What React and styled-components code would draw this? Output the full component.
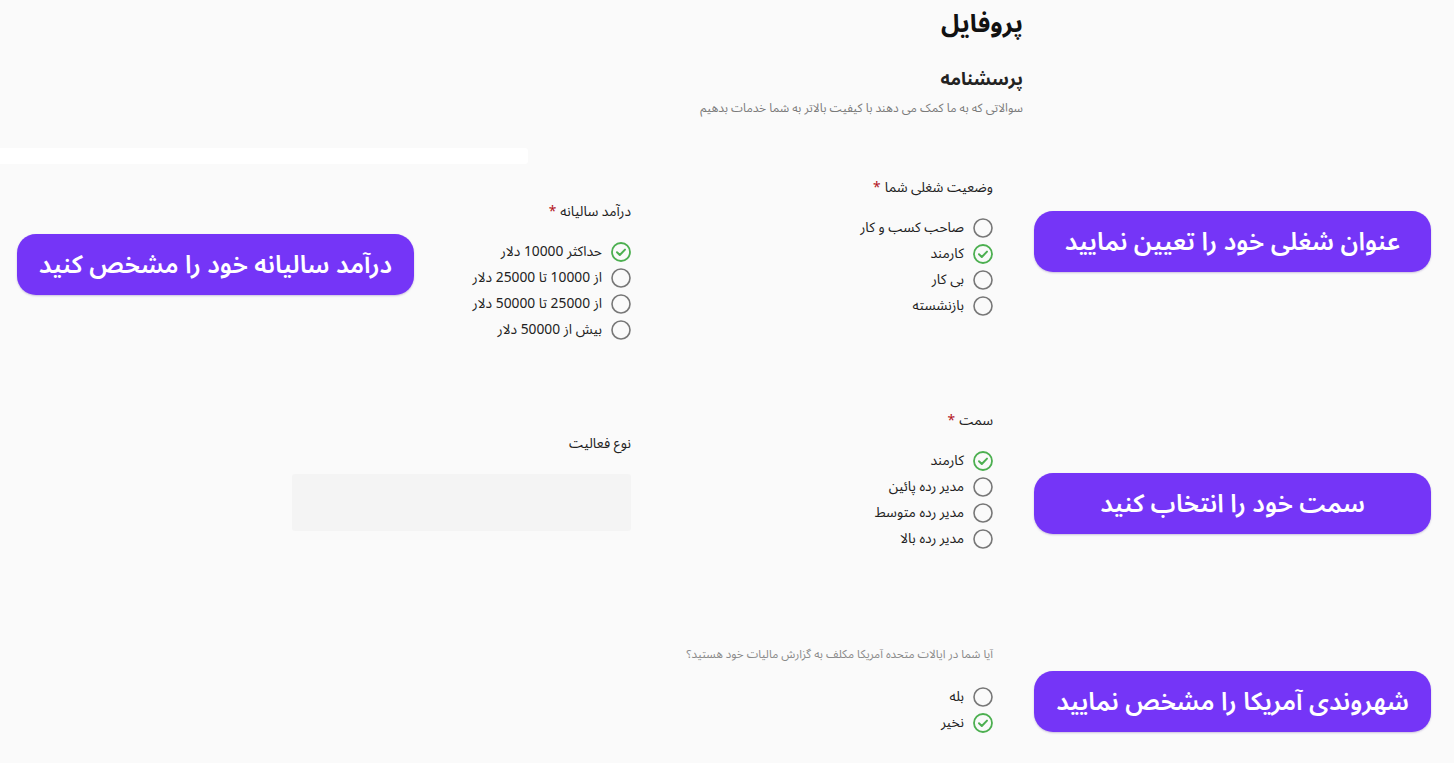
import React from "react";
import styled, { createGlobalStyle } from "styled-components";

const Global = createGlobalStyle`
  html, body { margin: 0; padding: 0; background: #fafafa; }
  body { font-family: "Noto Sans Arabic", "DejaVu Sans", sans-serif; color: #1e1e1e; }
  * { box-sizing: border-box; }
`;

const Page = styled.div`
  position: relative;
  width: 1454px;
  height: 763px;
  display: flex;
  flex-direction: column;
  overflow: hidden;
`;

const Header = styled.header`
  width: 733px;
  margin-left: 290px;
  padding-top: 4px;
  direction: rtl;
  text-align: right;
`;

const Title = styled.h1`
  margin: 0;
  padding-top: 1px;
  font-size: 25px;
  line-height: 38px;
  font-weight: 700;
  color: #111;
`;

const Subtitle = styled.h2`
  margin: 22px 0 0;
  font-size: 18px;
  line-height: 28px;
  font-weight: 700;
  color: #222;
`;

const Description = styled.p`
  margin: 6px 0 0;
  font-size: 12px;
  line-height: 20px;
  color: #7a7a7a;
`;

const Strip = styled.div`
  margin-top: 29px;
  width: 528px;
  height: 16px;
  flex-shrink: 0;
  background: #ffffff;
  border-radius: 0 3px 3px 0;
`;

const Form = styled.div`
  margin-top: 14px;
  margin-left: 290px;
  width: 733px;
  padding-right: 30px;
  direction: rtl;
  display: grid;
  grid-template-columns: 340px 340px;
  grid-template-rows: 233px 234px auto;
  column-gap: 22px;
`;

const Field = styled.div`
  display: flex;
  flex-direction: column;
  align-items: flex-start;
  padding-top: ${(p) => p.$offset || 0}px;
`;

const Label = styled.div`
  font-size: ${(p) => (p.$muted ? 11.6 : 13.8)}px;
  line-height: 20px;
  height: 20px;
  white-space: nowrap;
  color: ${(p) => (p.$muted ? "#8a8a8a" : "#222")};
`;

const Star = styled.span`
  color: #b3141c;
  margin-right: 4px;
`;

const Options = styled.div`
  margin-top: ${(p) => p.$gap}px;
  display: flex;
  flex-direction: column;
  gap: 6px;
`;

const Option = styled.label`
  display: flex;
  align-items: center;
  gap: 9px;
  height: 20px;
  font-size: 13.8px;
  line-height: 20px;
  white-space: nowrap;
  color: #222;
  cursor: pointer;
`;

const OptionText = styled.span`
  display: block;
  line-height: 20px;
  height: 20px;
`;

const TextBox = styled.div`
  margin-top: 20px;
  width: 339px;
  height: 57px;
  background: #f4f4f4;
  border-radius: 3px;
`;

const Badge = styled.div`
  position: absolute;
  left: ${(p) => p.$x}px;
  top: ${(p) => p.$y}px;
  width: 397px;
  height: 61px;
  border-radius: 19px;
  background: #7535f7;
  color: #fff;
  direction: rtl;
  display: flex;
  align-items: center;
  justify-content: center;
  font-size: 25px;
  line-height: 34px;
  font-weight: 600;
  white-space: nowrap;
  box-shadow: 0 1px 2px rgba(60, 20, 140, 0.25);
`;

const Radio = ({ checked }) =>
  checked ? (
    <svg width="20" height="20" viewBox="0 0 20 20">
      <circle cx="10" cy="10" r="9" fill="none" stroke="#4caf50" strokeWidth="1.8" />
      <path d="M6 10.3 L8.8 13 L14 7.6" fill="none" stroke="#4caf50" strokeWidth="2" strokeLinecap="round" strokeLinejoin="round" />
    </svg>
  ) : (
    <svg width="20" height="20" viewBox="0 0 20 20">
      <circle cx="10" cy="10" r="9" fill="none" stroke="#777" strokeWidth="1.6" />
    </svg>
  );

const Question = ({ label, required, muted, options, checked, offset, gap = 20 }) => (
  <Field $offset={offset}>
    <Label $muted={muted}>
      {label}
      {required && <Star>*</Star>}
    </Label>
    <Options $gap={gap}>
      {options.map((o, i) => (
        <Option key={o}>
          <Radio checked={i === checked} />
          <OptionText>{o}</OptionText>
        </Option>
      ))}
    </Options>
  </Field>
);

export default function App() {
  return (
    <Page>
      <Global />
      <Header>
        <Title>پروفایل</Title>
        <Subtitle>پرسشنامه</Subtitle>
        <Description>سوالاتی که به ما کمک می دهند با کیفیت بالاتر به شما خدمات بدهیم</Description>
      </Header>
      <Strip />
      <Form>
        <Question
          label="وضعیت شغلی شما"
          required
          options={["صاحب کسب و کار", "کارمند", "بی کار", "بازنشسته"]}
          checked={1}
        />
        <Question
          label="درآمد سالیانه"
          required
          offset={24}
          gap={20}
          options={["حداکثر 10000 دلار", "از 10000 تا 25000 دلار", "از 25000 تا 50000 دلار", "بیش از 50000 دلار"]}
          checked={0}
        />
        <Question
          label="سمت"
          required
          options={["کارمند", "مدیر رده پائین", "مدیر رده متوسط", "مدیر رده بالا"]}
          checked={0}
        />
        <Field $offset={23}>
          <Label>نوع فعالیت</Label>
          <TextBox />
        </Field>
        <Question
          label="آیا شما در ایالات متحده آمریکا مکلف به گزارش مالیات خود هستید؟"
          muted
          gap={22}
          options={["بله", "نخیر"]}
          checked={1}
        />
      </Form>
      <Badge $x={1034} $y={211}>عنوان شغلی خود را تعیین نمایید</Badge>
      <Badge $x={17} $y={234}>درآمد سالیانه خود را مشخص کنید</Badge>
      <Badge $x={1034} $y={473}>سمت خود را انتخاب کنید</Badge>
      <Badge $x={1034} $y={671}>شهروندی آمریکا را مشخص نمایید</Badge>
    </Page>
  );
}
